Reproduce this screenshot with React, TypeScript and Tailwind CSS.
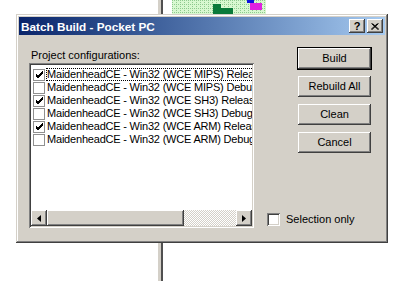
import React from 'react';

const rows = [
  { label: 'MaidenheadCE - Win32 (WCE MIPS) Release', checked: true, focus: true },
  { label: 'MaidenheadCE - Win32 (WCE MIPS) Debug', checked: false },
  { label: 'MaidenheadCE - Win32 (WCE SH3) Release', checked: true },
  { label: 'MaidenheadCE - Win32 (WCE SH3) Debug', checked: false },
  { label: 'MaidenheadCE - Win32 (WCE ARM) Release', checked: true },
  { label: 'MaidenheadCE - Win32 (WCE ARM) Debug', checked: false },
];

const raised =
  'bg-[#d4d0c8] shadow-[inset_-1px_-1px_#404040,inset_1px_1px_#fff,inset_-2px_-2px_#808080]';

function Check() {
  return (
    <svg width="9" height="9" viewBox="0 0 9 9">
      <path d="M1 4 L3 6 L8 1 M1 5 L3 7 L8 2 M1 6 L3 8 L8 3" stroke="#000" strokeWidth="1" fill="none" />
    </svg>
  );
}

function PushButton({ label, isDefault }: { label: string; isDefault?: boolean }) {
  return (
    <div className={isDefault ? 'border border-black' : 'border border-transparent'}>
      <div className={`h-[21px] w-[73px] flex items-center justify-center text-black ${raised}`}>{label}</div>
    </div>
  );
}

function Grid() {
  const lines = [];
  for (let x = 0; x <= 96; x += 4) lines.push(<line key={'v' + x} x1={x + 0.5} y1="0" x2={x + 0.5} y2="14" stroke="#8fc98f" strokeDasharray="1 1" />);
  for (let y = 0; y <= 14; y += 4) lines.push(<line key={'h' + y} x1="0" y1={y + 0.5} x2="96" y2={y + 0.5} stroke="#8fc98f" strokeDasharray="1 1" />);
  return (
    <svg width="94" height="14" viewBox="0 0 94 14">
      <rect width="94" height="14" fill="#d8f8d0" />
      {lines}
      <rect x="41" y="4" width="8" height="10" fill="#0a7a3a" />
      <rect x="49" y="8" width="12" height="6" fill="#0a7a3a" />
      <rect x="75" y="0" width="7" height="3" fill="#1010e0" />
      <rect x="78" y="3" width="12" height="7" fill="#e020e0" />
    </svg>
  );
}

export default function App() {
  return (
    <div className="relative w-[416px] h-[281px] bg-white overflow-hidden text-[11px] leading-[13px] text-black" style={{ fontFamily: '"Liberation Sans", Arial, sans-serif' }}>
      {/* background behind dialog */}
      <div className="absolute left-[158px] top-0 h-full flex">
        <div className="w-[3px] bg-[#d4d0c8]" />
        <div className="w-[2px] bg-[#505050]" />
      </div>
      <div className="absolute left-[172px] top-0">
        <Grid />
      </div>

      {/* dialog window */}
      <div className="absolute left-[16px] top-[14px] w-[372px] h-[229px] p-[3px] bg-[#d4d0c8] shadow-[inset_-1px_-1px_#404040,inset_1px_1px_#d4d0c8,inset_-2px_-2px_#808080,inset_2px_2px_#fff] flex flex-col">
        <div className="h-[18px] flex items-center justify-between pl-[2px] pr-[2px] bg-gradient-to-r from-[#0a246a] to-[#a6caf0]">
          <span className="text-white font-bold text-[11.75px]">Batch Build - Pocket PC</span>
          <div className="flex items-center gap-[2px]">
            <div className={`w-[16px] h-[14px] flex items-center justify-center font-bold text-[11px] ${raised}`}>?</div>
            <div className={`w-[16px] h-[14px] flex items-center justify-center ${raised}`}>
              <svg width="8" height="7" viewBox="0 0 8 7">
                <path d="M0.5 0.5 L7 6.5 M1.5 0.5 L8 6.5 M6.5 0.5 L0 6.5 M7.5 0.5 L1 6.5" stroke="#000" strokeWidth="1" />
              </svg>
            </div>
          </div>
        </div>

        <div className="flex flex-1 pl-[10px] pb-[12px]">
          <div className="flex flex-col w-[225px] pt-[14px]">
            <div className="pl-[2px] h-[13px]">Project configurations:</div>
            <div className="mt-[1px] flex-1 flex flex-col bg-white shadow-[inset_1px_1px_#808080,inset_-1px_-1px_#fff,inset_2px_2px_#404040,inset_-2px_-2px_#d4d0c8] p-[2px]">
              <div className="flex-1 overflow-hidden pt-[3px] tracking-[-0.2px]">
                {rows.map((r) => (
                  <div key={r.label} className="flex items-center h-[13px] pl-[2px] whitespace-nowrap">
                    <div className="w-[12px] h-[12px] shrink-0 border border-[#909090] bg-white flex items-center justify-center">
                      {r.checked && <Check />}
                    </div>
                    <span className={`ml-[1px] px-[1px] ${r.focus ? 'outline outline-1 outline-dotted outline-black -outline-offset-1' : ''}`}>{r.label}</span>
                  </div>
                ))}
              </div>
              <div className="h-[16px] flex">
                <div className={`w-[16px] h-[16px] flex items-center justify-center ${raised}`}>
                  <svg width="4" height="7" viewBox="0 0 4 7"><path d="M4 0 L0 3.5 L4 7 Z" fill="#000" /></svg>
                </div>
                <div className={`w-[137px] h-[16px] ${raised}`} />
                <div className="flex-1 bg-[repeating-conic-gradient(#d4d0c8_0_25%,#fff_0_50%)] bg-[length:2px_2px]" />
                <div className={`w-[16px] h-[16px] flex items-center justify-center ${raised}`}>
                  <svg width="4" height="7" viewBox="0 0 4 7"><path d="M0 0 L4 3.5 L0 7 Z" fill="#000" /></svg>
                </div>
              </div>
            </div>
          </div>

          <div className="ml-[13px] flex flex-col flex-1 pt-[12px]">
            <div className="flex flex-col gap-[5px] items-start pl-[30px]">
              <PushButton label="Build" isDefault />
              <PushButton label="Rebuild All" />
              <PushButton label="Clean" />
              <PushButton label="Cancel" />
            </div>
            <div className="mt-auto flex items-center mb-[2px]">
              <div className="w-[13px] h-[13px] bg-white shadow-[inset_1px_1px_#808080,inset_-1px_-1px_#fff,inset_2px_2px_#404040,inset_-2px_-2px_#d4d0c8]" />
              <span className="ml-[6px]">Selection only</span>
            </div>
          </div>
        </div>
      </div>
    </div>
  );
}
